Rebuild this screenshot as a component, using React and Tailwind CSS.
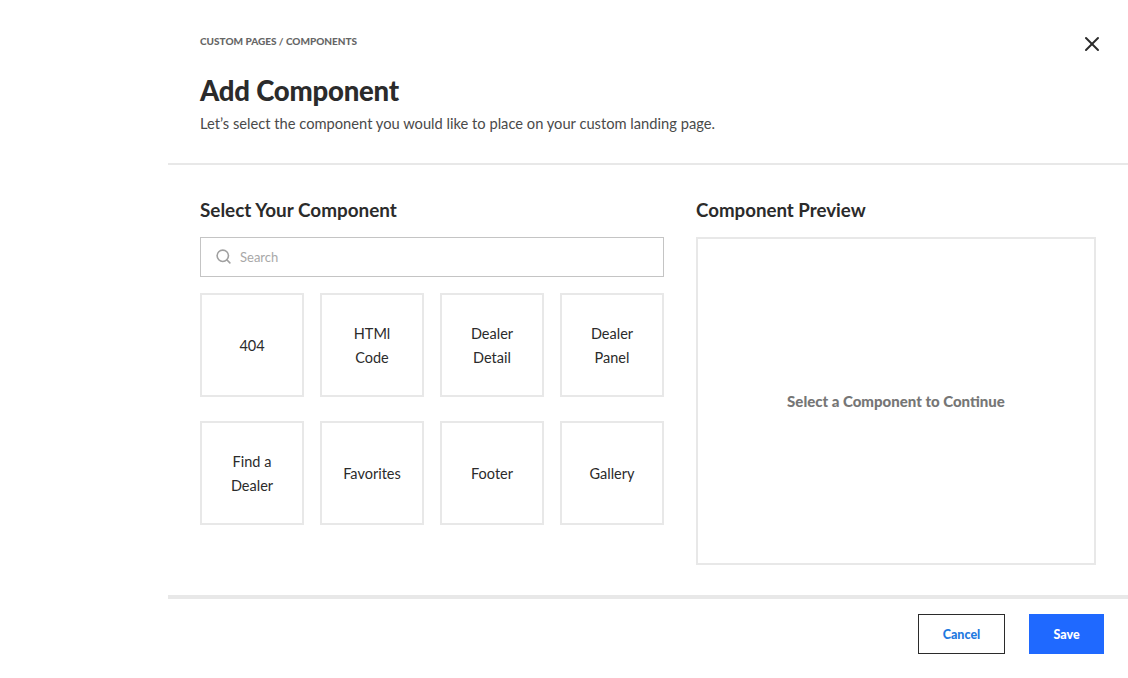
import { Search, X } from "lucide-react";

const components = [
  ["404"],
  ["HTMl", "Code"],
  ["Dealer", "Detail"],
  ["Dealer", "Panel"],
  ["Find a", "Dealer"],
  ["Favorites"],
  ["Footer"],
  ["Gallery"],
];

function Tile({ lines }) {
  return (
    <button className="flex h-[104px] w-[104px] flex-col items-center justify-center border-2 border-[#e8e8e8] bg-white pt-px text-[14.5px] leading-6 text-[#2b2b2b]">
      {lines.map((line) => (
        <span key={line}>{line}</span>
      ))}
    </button>
  );
}

export default function App() {
  return (
    <div className="h-[678px] w-[1128px] overflow-hidden bg-white pl-[168px] font-['Lato','Noto_Sans',sans-serif]">
      <header className="relative h-[165px] border-b-2 border-[#e8e8e8] pl-8 pt-[35px]">
        <p className="text-[10px] font-black leading-3 text-[#666666]">CUSTOM PAGES / COMPONENTS</p>
        <h1 className="mt-[26px] text-[27.5px] font-black leading-9 tracking-[-0.2px] text-[#2b2b2b]">Add Component</h1>
        <p className="mt-[4px] text-[14.7px] leading-5 text-[#4a4a4a]">
          Let’s select the component you would like to place on your custom landing page.
        </p>
        <button className="absolute right-[24px] top-[32px] text-[#2b2b2b]">
          <X size={24} strokeWidth={2} />
        </button>
      </header>

      <main className="flex h-[430px] gap-8 px-8 pt-[33px]">
        <section className="w-[464px]">
          <h2 className="text-[18.9px] font-bold leading-6 text-[#2b2b2b]">Select Your Component</h2>
          <div className="mt-[15px] flex h-10 items-center gap-[8px] border border-[#c4c4c4] pl-[14px]">
            <Search size={17} strokeWidth={2.25} className="-mt-0.5 text-[#a0a0a0]" />
            <span className="pt-0.5 text-[13px] text-[#a8a8a8]">Search</span>
          </div>
          <div className="mt-4 grid grid-cols-[repeat(4,104px)] gap-x-4 gap-y-6">
            {components.map((lines) => (
              <Tile key={lines.join(" ")} lines={lines} />
            ))}
          </div>
        </section>

        <section className="w-[400px]">
          <h2 className="text-[18.7px] font-bold leading-6 text-[#2b2b2b]">Component Preview</h2>
          <div className="mt-[15px] flex h-[328px] items-center justify-center border-2 border-[#e8e8e8]">
            <p className="text-[15px] font-black text-[#767676]">Select a Component to Continue</p>
          </div>
        </section>
      </main>

      <footer className="flex justify-end gap-6 border-t-4 border-[#e8e8e8] pr-6 pt-[15px]">
        <button className="h-10 w-[87px] border border-[#2b2b2b] pt-[3px] text-[12.5px] font-black text-[#1f7ae0]">Cancel</button>
        <button className="h-10 w-[75px] bg-[#1f69ff] pt-[3px] text-[12.5px] font-black text-white">Save</button>
      </footer>
    </div>
  );
}
